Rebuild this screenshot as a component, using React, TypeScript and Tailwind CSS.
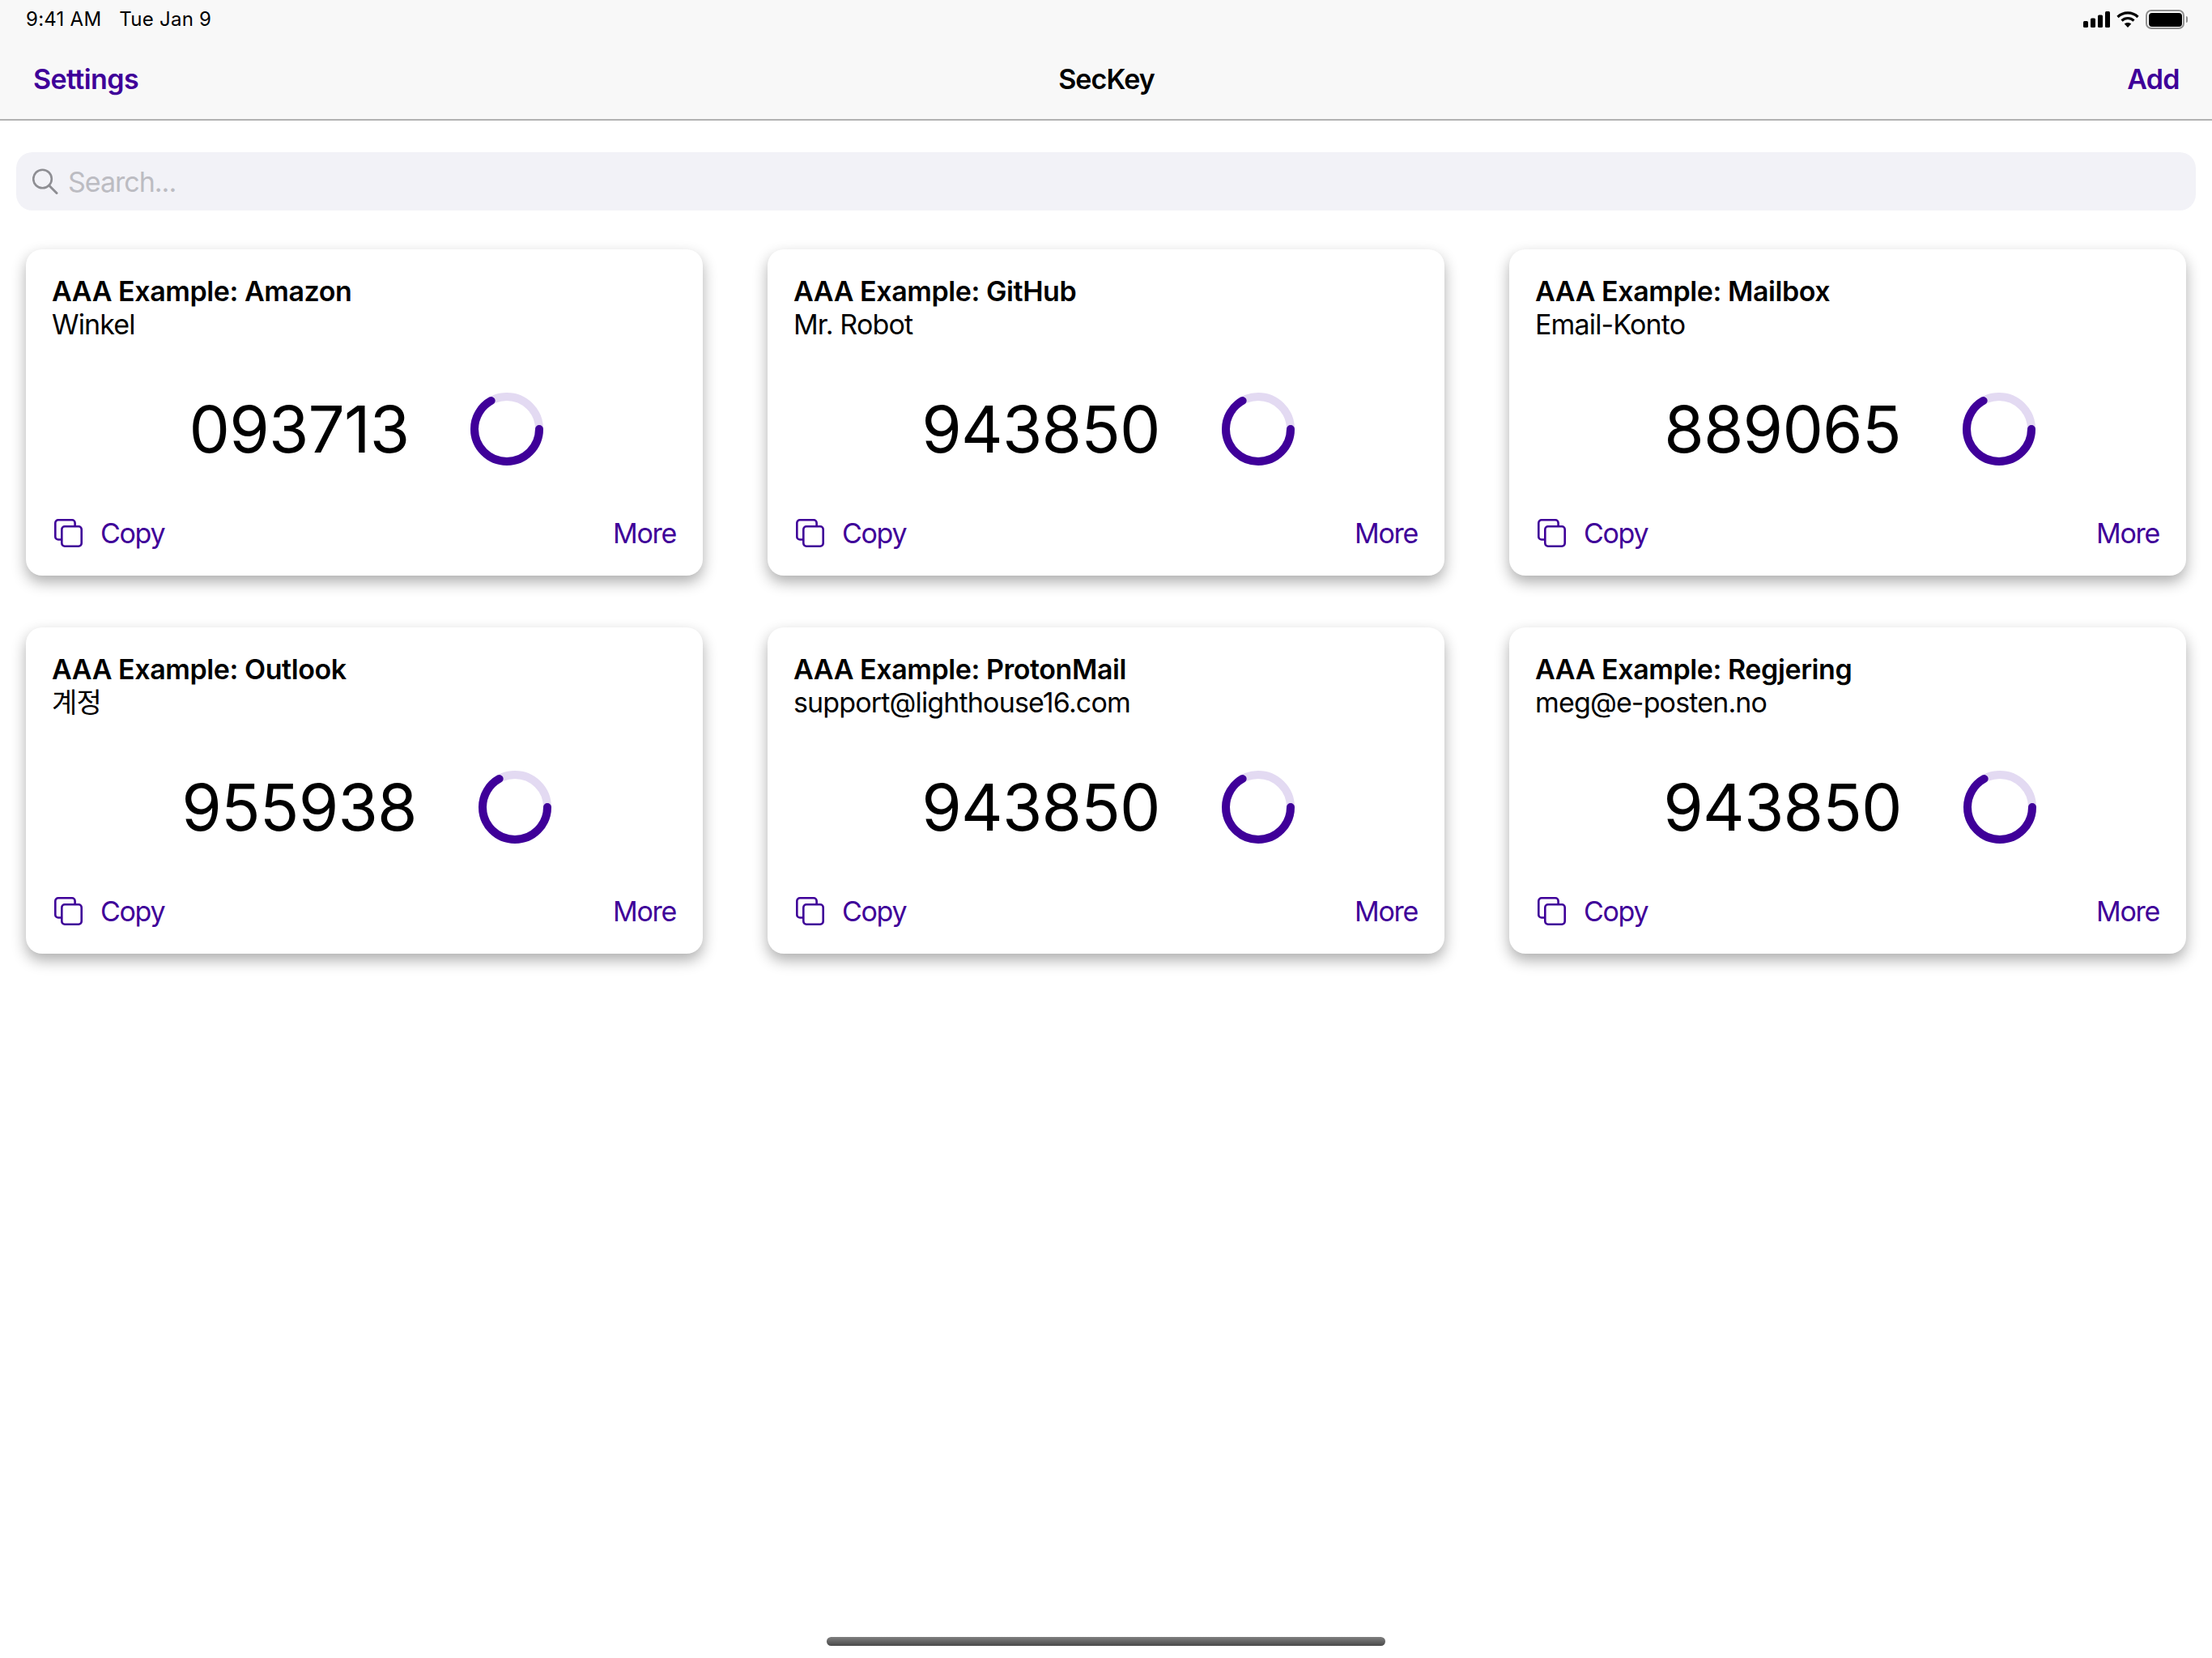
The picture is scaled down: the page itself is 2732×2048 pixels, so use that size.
import React from 'react';

interface Account {
  title: string;
  subtitle: string;
  code: string;
}

const accounts: Account[] = [
  { title: 'AAA Example: Amazon', subtitle: 'Winkel', code: '093713' },
  { title: 'AAA Example: GitHub', subtitle: 'Mr. Robot', code: '943850' },
  { title: 'AAA Example: Mailbox', subtitle: 'Email-Konto', code: '889065' },
  { title: 'AAA Example: Outlook', subtitle: '계정', code: '955938' },
  { title: 'AAA Example: ProtonMail', subtitle: 'support@lighthouse16.com', code: '943850' },
  { title: 'AAA Example: Regjering', subtitle: 'meg@e-posten.no', code: '943850' },
];

function StatusIcons() {
  return (
    <div className="flex items-center gap-[8px]">
      <svg width="33" height="20" viewBox="0 0 33 20" className="fill-black">
        <rect x="0" y="12" width="6" height="8" rx="1.5" />
        <rect x="9" y="8.5" width="6" height="11.5" rx="1.5" />
        <rect x="18" y="4.5" width="6" height="15.5" rx="1.5" />
        <rect x="27" y="0" width="6" height="20" rx="1.5" />
      </svg>
      <svg width="28" height="20" viewBox="0 0 28 20" fill="none" className="stroke-black">
        <path d="M1.5 7 C8.5 0.2 19.5 0.2 26.5 7" strokeWidth="3.2" />
        <path d="M6.5 11.5 C10.8 7.5 17.2 7.5 21.5 11.5" strokeWidth="3.2" />
        <path d="M14 20 L9.8 15.6 C12.2 13.6 15.8 13.6 18.2 15.6 Z" className="fill-black" strokeWidth="0" />
      </svg>
      <div className="flex items-center">
        <div className="flex h-[24px] w-[48px] items-center justify-center rounded-[7px] border-2 border-[#8f8f8f]">
          <div className="h-[17px] w-[41px] rounded-[4px] bg-black" />
        </div>
        <div className="ml-[2px] h-[8px] w-[2px] rounded-r-full bg-[#8f8f8f]" />
      </div>
    </div>
  );
}

function CopyIcon() {
  return (
    <svg width="35" height="35" viewBox="0 0 35 35" fill="none" className="stroke-[#3f0099]" strokeWidth="2.6">
      <rect x="9.3" y="9.3" width="24.4" height="24.4" rx="3.6" />
      <path d="M8 25.5 H4.9 a3.6 3.6 0 0 1 -3.6 -3.6 V4.9 a3.6 3.6 0 0 1 3.6 -3.6 H22 a3.6 3.6 0 0 1 3.6 3.6 V8" />
    </svg>
  );
}

function Countdown() {
  return (
    <svg width="90" height="90" viewBox="0 0 90 90" fill="none" strokeWidth="10">
      <circle cx="45" cy="45" r="40" className="stroke-[#e3daf2]" />
      <circle cx="45" cy="45" r="40" strokeLinecap="round" strokeDasharray="168 252" className="stroke-[#3f0099]" />
    </svg>
  );
}

function AccountCard({ title, subtitle, code }: Account) {
  return (
    <div className="flex h-[403px] flex-col rounded-[20px] bg-white pl-[32px] pr-[33px] pt-[31px] shadow-[0_8px_18px_rgba(0,0,0,0.32)]">
      <div className="text-[34px] font-semibold leading-[41px] tracking-[-0.42px] text-black">{title}</div>
      <div className="text-[34px] leading-[41px] tracking-[-0.85px] text-black">{subtitle}</div>
      <div className="mt-[64px] flex items-center justify-center gap-[76px] pl-[6px]">
        <span className="text-[80px] leading-[90px] tracking-[-0.8px] text-black">{code}</span>
        <Countdown />
      </div>
      <div className="mt-[63px] flex items-center justify-between text-[34px] leading-[41px] tracking-[-1.3px] text-[#3f0099]">
        <div className="flex items-center gap-[22px] pl-[3px]">
          <CopyIcon />
          <span>Copy</span>
        </div>
        <span>More</span>
      </div>
    </div>
  );
}

export default function App() {
  return (
    <div className="flex min-h-[2048px] flex-col bg-white font-['Inter','Noto_Sans_CJK_KR',sans-serif]">
      <header className="h-[149px] border-b-2 border-[#b2b2b2] bg-[#f8f8f8]">
        <div className="flex h-[48px] items-center justify-between pl-[32px] pr-[30px] text-[24px] tracking-[0.25px] text-black">
          <div className="flex gap-[22px]">
            <span>9:41 AM</span>
            <span>Tue Jan 9</span>
          </div>
          <StatusIcons />
        </div>
        <div className="flex h-[102px] items-center justify-between pl-[41px] pr-[40px] pb-[4px] text-[34px] font-semibold tracking-[-0.6px]">
          <span className="w-[200px] text-[#3f0099]">Settings</span>
          <span className="tracking-[-0.9px] text-black">SecKey</span>
          <span className="w-[200px] text-right text-[#3f0099]">Add</span>
        </div>
      </header>
      <div className="mx-[20px] mt-[39px] flex h-[72px] items-center gap-[12px] rounded-[20px] bg-[#f2f2f7] pl-[20px]">
        <svg width="32" height="32" viewBox="0 0 32 32" fill="none" className="stroke-[#8e8e93]" strokeWidth="2.6">
          <circle cx="12.5" cy="13" r="11.3" />
          <path d="M20.5 21 L30 30.5" strokeLinecap="round" strokeWidth="3" />
        </svg>
        <span className="text-[34px] tracking-[-1px] text-[#bcbcc2]">Search...</span>
      </div>
      <main className="grid grid-cols-3 gap-x-[80px] gap-y-[64px] px-[32px] pt-[48px]">
        {accounts.map((account) => (
          <AccountCard key={account.title} {...account} />
        ))}
      </main>
      <div className="mb-[15px] mt-auto h-[11px] w-[690px] self-center rounded-full bg-gradient-to-b from-[#808080] to-[#4a4a4a]" />
    </div>
  );
}
